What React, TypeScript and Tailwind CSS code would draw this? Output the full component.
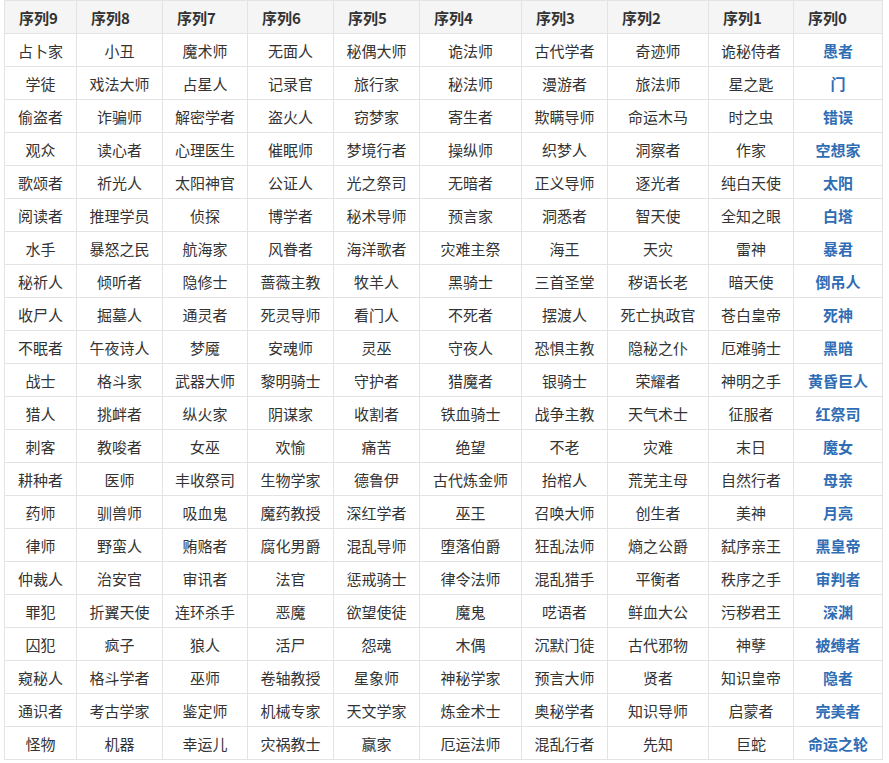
import React from "react";

const headers = ["序列9", "序列8", "序列7", "序列6", "序列5", "序列4", "序列3", "序列2", "序列1", "序列0"];
const widths = [72, 86, 85, 86, 86, 102, 86, 101, 85, 89];

const rows: string[][] = [
  ["占卜家", "小丑", "魔术师", "无面人", "秘偶大师", "诡法师", "古代学者", "奇迹师", "诡秘侍者", "愚者"],
  ["学徒", "戏法大师", "占星人", "记录官", "旅行家", "秘法师", "漫游者", "旅法师", "星之匙", "门"],
  ["偷盗者", "诈骗师", "解密学者", "盗火人", "窃梦家", "寄生者", "欺瞒导师", "命运木马", "时之虫", "错误"],
  ["观众", "读心者", "心理医生", "催眠师", "梦境行者", "操纵师", "织梦人", "洞察者", "作家", "空想家"],
  ["歌颂者", "祈光人", "太阳神官", "公证人", "光之祭司", "无暗者", "正义导师", "逐光者", "纯白天使", "太阳"],
  ["阅读者", "推理学员", "侦探", "博学者", "秘术导师", "预言家", "洞悉者", "智天使", "全知之眼", "白塔"],
  ["水手", "暴怒之民", "航海家", "风眷者", "海洋歌者", "灾难主祭", "海王", "天灾", "雷神", "暴君"],
  ["秘祈人", "倾听者", "隐修士", "蔷薇主教", "牧羊人", "黑骑士", "三首圣堂", "秽语长老", "暗天使", "倒吊人"],
  ["收尸人", "掘墓人", "通灵者", "死灵导师", "看门人", "不死者", "摆渡人", "死亡执政官", "苍白皇帝", "死神"],
  ["不眠者", "午夜诗人", "梦魇", "安魂师", "灵巫", "守夜人", "恐惧主教", "隐秘之仆", "厄难骑士", "黑暗"],
  ["战士", "格斗家", "武器大师", "黎明骑士", "守护者", "猎魔者", "银骑士", "荣耀者", "神明之手", "黄昏巨人"],
  ["猎人", "挑衅者", "纵火家", "阴谋家", "收割者", "铁血骑士", "战争主教", "天气术士", "征服者", "红祭司"],
  ["刺客", "教唆者", "女巫", "欢愉", "痛苦", "绝望", "不老", "灾难", "末日", "魔女"],
  ["耕种者", "医师", "丰收祭司", "生物学家", "德鲁伊", "古代炼金师", "抬棺人", "荒芜主母", "自然行者", "母亲"],
  ["药师", "驯兽师", "吸血鬼", "魔药教授", "深红学者", "巫王", "召唤大师", "创生者", "美神", "月亮"],
  ["律师", "野蛮人", "贿赂者", "腐化男爵", "混乱导师", "堕落伯爵", "狂乱法师", "熵之公爵", "弑序亲王", "黑皇帝"],
  ["仲裁人", "治安官", "审讯者", "法官", "惩戒骑士", "律令法师", "混乱猎手", "平衡者", "秩序之手", "审判者"],
  ["罪犯", "折翼天使", "连环杀手", "恶魔", "欲望使徒", "魔鬼", "呓语者", "鲜血大公", "污秽君王", "深渊"],
  ["囚犯", "疯子", "狼人", "活尸", "怨魂", "木偶", "沉默门徒", "古代邪物", "神孽", "被缚者"],
  ["窥秘人", "格斗学者", "巫师", "卷轴教授", "星象师", "神秘学家", "预言大师", "贤者", "知识皇帝", "隐者"],
  ["通识者", "考古学家", "鉴定师", "机械专家", "天文学家", "炼金术士", "奥秘学者", "知识导师", "启蒙者", "完美者"],
  ["怪物", "机器", "幸运儿", "灾祸教士", "赢家", "厄运法师", "混乱行者", "先知", "巨蛇", "命运之轮"],
];

export default function App() {
  return (
    <div className="w-[889px] h-[763px] bg-white pl-[4px] overflow-hidden" style={{ fontFamily: '"Noto Sans CJK SC", "Noto Sans", sans-serif' }}>
      <table className="table-fixed border-collapse w-[878px] text-[15px] text-[#333]">
        <colgroup>
          {widths.map((w, i) => (
            <col key={i} style={{ width: w }} />
          ))}
        </colgroup>
        <thead>
          <tr className="h-[33px] bg-[#f5f5f5]">
            {headers.map((h) => (
              <th key={h} className="border border-[#e3e3e3] px-[14px] p-0 text-left font-bold text-[15px] leading-none text-[#333]">
                {h}
              </th>
            ))}
          </tr>
        </thead>
        <tbody>
          {rows.map((r, ri) => (
            <tr key={ri} className="h-[33px]">
              {r.map((c, ci) => (
                <td
                  key={ci}
                  className={
                    ci === 9
                      ? "border border-[#e3e3e3] p-0 text-center leading-none font-bold text-[#2f6db5]"
                      : "border border-[#e3e3e3] p-0 text-center leading-none"
                  }
                >
                  {c}
                </td>
              ))}
            </tr>
          ))}
        </tbody>
      </table>
    </div>
  );
}
